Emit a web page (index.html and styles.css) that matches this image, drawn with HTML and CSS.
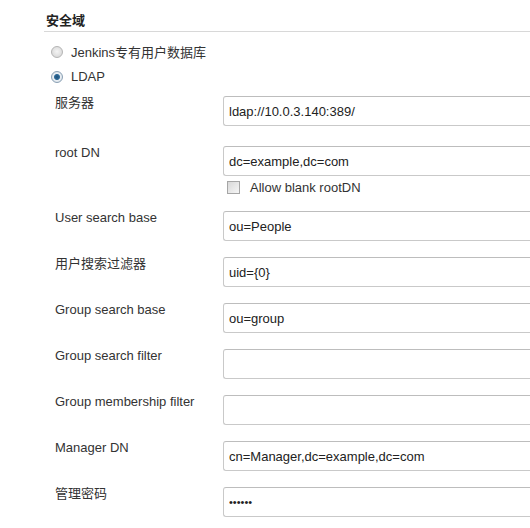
FILE: index.html
```html
<!DOCTYPE html>
<html lang="zh-CN">
<head>
    <meta charset="UTF-8">
    <meta name="viewport" content="width=device-width, initial-scale=1.0">
    <title>安全域</title>
    <link rel="stylesheet" href="styles.css">
</head>
<body>
    <div class="section">
        <h2 class="section-title">安全域</h2>
        <label class="radio-row"><input type="radio" name="realm"> Jenkins专有用户数据库</label>
        <label class="radio-row"><input type="radio" name="realm" checked> LDAP</label>

        <div class="fields">
            <div class="field field-first">
                <label class="field-label" for="server">服务器</label>
                <div class="field-control"><input type="text" id="server" value="ldap://10.0.3.140:389/"></div>
            </div>
            <div class="field">
                <label class="field-label" for="rootdn">root DN</label>
                <div class="field-control">
                    <input type="text" id="rootdn" value="dc=example,dc=com">
                    <label class="check-row"><input type="checkbox"> Allow blank rootDN</label>
                </div>
            </div>
            <div class="field">
                <label class="field-label" for="user_base">User search base</label>
                <div class="field-control"><input type="text" id="user_base" value="ou=People"></div>
            </div>
            <div class="field">
                <label class="field-label" for="user_filter">用户搜索过滤器</label>
                <div class="field-control"><input type="text" id="user_filter" value="uid={0}"></div>
            </div>
            <div class="field">
                <label class="field-label" for="group_base">Group search base</label>
                <div class="field-control"><input type="text" id="group_base" value="ou=group"></div>
            </div>
            <div class="field">
                <label class="field-label" for="group_filter">Group search filter</label>
                <div class="field-control"><input type="text" id="group_filter" value=""></div>
            </div>
            <div class="field">
                <label class="field-label" for="member_filter">Group membership filter</label>
                <div class="field-control"><input type="text" id="member_filter" value=""></div>
            </div>
            <div class="field">
                <label class="field-label" for="manager_dn">Manager DN</label>
                <div class="field-control"><input type="text" id="manager_dn" value="cn=Manager,dc=example,dc=com"></div>
            </div>
            <div class="field">
                <label class="field-label" for="manager_pw">管理密码</label>
                <div class="field-control"><input type="password" id="manager_pw" value="secret"></div>
            </div>
        </div>
    </div>
</body>
</html>
```

FILE: styles.css
```css
html, body { margin: 0; padding: 0; background: #fff; }
body { font-family: "Liberation Sans", Arial, "Noto Sans CJK SC", sans-serif; font-size: 13px; color: #333; }

.section { padding: 11px 0 0 44px; }
.section-title { margin: 0; padding-left: 2px; font-size: 13px; line-height: 20px; font-weight: bold; color: #222; border-bottom: 1px solid #d8d8d8; }

.radio-row { display: flex; align-items: center; height: 25px; padding-left: 7px; gap: 8px; color: #333; }
.radio-row:first-of-type { margin-top: 7px; }
.radio-row input { appearance: none; margin: 0; width: 12px; height: 12px; border-radius: 50%; border: 1px solid #b4b4b4; box-sizing: border-box;
    background: radial-gradient(circle at 50% 45%, #f4f4f4 0, #dcdcdc 70%); }
.radio-row input:checked { border-color: #8aa0b4;
    background: radial-gradient(circle, #1f4f78 0, #2e6a98 2.5px, #e9eef3 3.5px, #cfd8e0 100%); }

.fields { padding-top: 7px; }
.field { display: grid; grid-template-columns: 168px 1fr; padding-left: 11px; margin-bottom: 16px; }
.field-first { margin-bottom: 20px; }
.field-label { line-height: 14px; color: #333; }
.field-control { min-width: 0; }
.field-control input[type="text"], .field-control input[type="password"] { display: block; width: 100%; height: 30px; box-sizing: border-box; margin: 0;
    padding: 0 5px; border: 1px solid #c9c9c9; border-top-color: #bdbdbd; border-right: 0; border-radius: 3px 0 0 3px;
    font: 13px "Liberation Sans", Arial, sans-serif; color: #222; background: #fff; }
.field-control input[type="password"] { font-size: 11px; }

.check-row { display: flex; align-items: center; gap: 10px; height: 15px; margin-top: 4px; padding-left: 4px; color: #333; }
.check-row input { appearance: none; margin: 0; width: 13px; height: 13px; border: 1px solid #a6a6a6; box-sizing: border-box;
    background: linear-gradient(135deg, #d8d8d8, #f6f6f6); }
```
